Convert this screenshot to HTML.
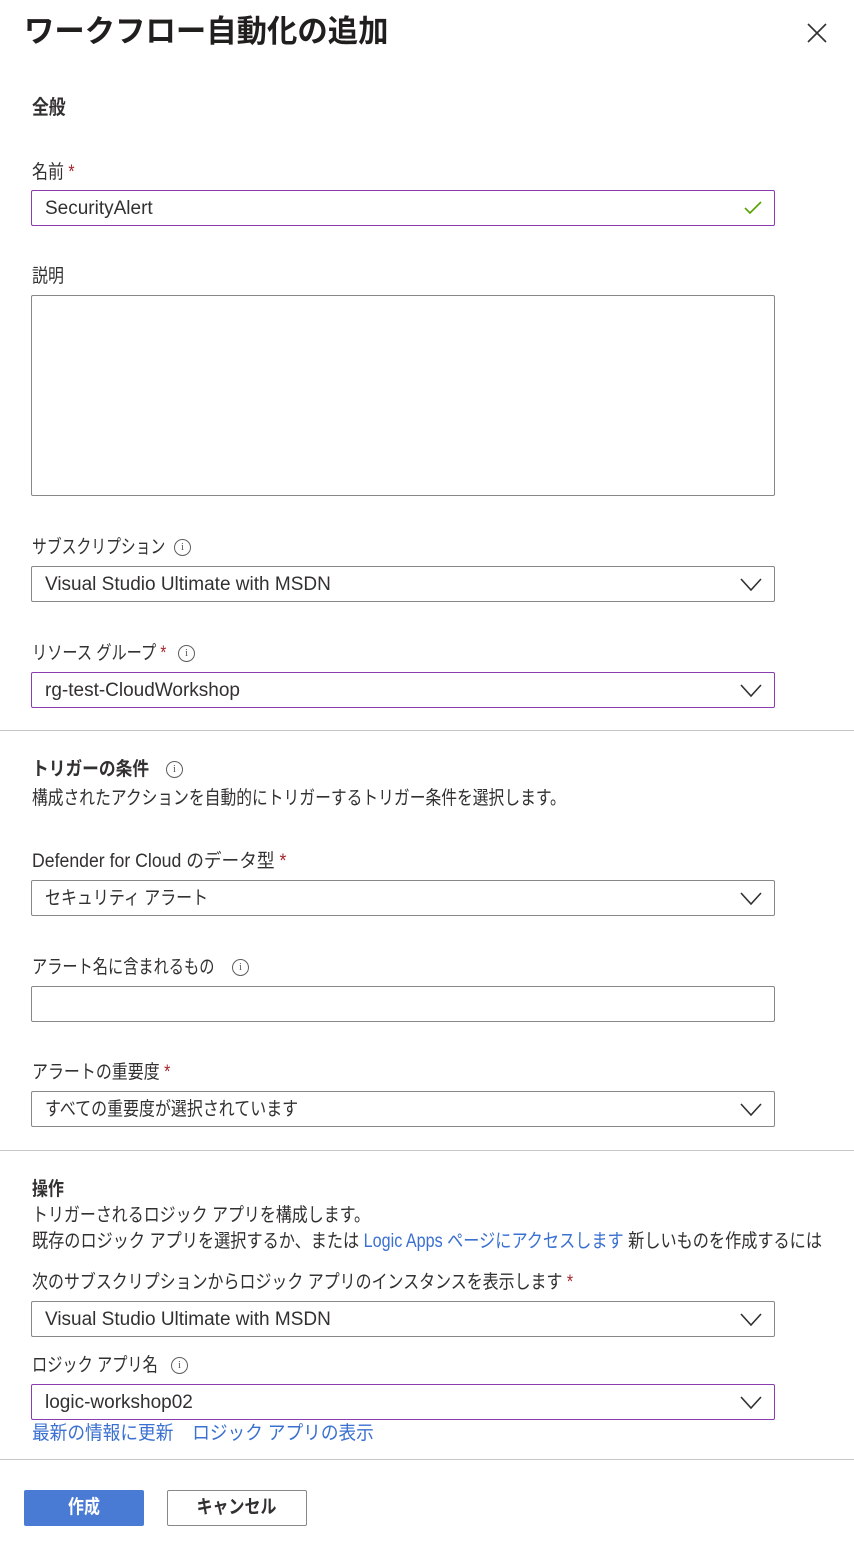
<!DOCTYPE html>
<html><head><meta charset="utf-8"><style>
*{margin:0;padding:0;box-sizing:border-box}
body{width:854px;height:1548px;background:#fff;position:relative;font-family:"Liberation Sans","Noto Sans CJK JP",sans-serif;color:#323130;overflow:hidden}
.a{position:absolute;white-space:nowrap}
.lbl{font-size:19px;line-height:24px;left:32px;transform:scaleX(.84);transform-origin:0 50%}
.req{color:#a4262c}
.box{position:absolute;left:31px;width:744px;height:36px;border:1px solid #8a8886;border-radius:2px;font-size:19px;line-height:36px;padding-left:13px;color:#323130;white-space:nowrap}
.p{border-color:#8a3cb0}
.chev{position:absolute;right:12px;top:11px}
.j{display:inline-block;transform:scaleX(.84);transform-origin:0 50%}
.info{position:absolute;width:17px;height:17px;border:1px solid #605e5c;border-radius:50%;font-size:11px;line-height:15px;text-align:center;color:#605e5c;font-family:"Liberation Serif",serif}
.hr{position:absolute;left:0;width:854px;height:1px;background:#c8c6c4}
.lnk{color:#3a70d0}
</style></head><body>
<div class="a" style="left:24px;top:12px;font-size:31px;line-height:40px;font-weight:bold;color:#201f1e;transform:scaleX(.98);transform-origin:0 50%">ワークフロー自動化の追加</div>
<svg class="a" style="left:807px;top:23px" width="20" height="20" viewBox="0 0 20 20"><path d="M1 1L19 19M19 1L1 19" stroke="#323130" stroke-width="1.6"/></svg>
<div class="a lbl" style="top:95px;font-size:20px;line-height:26px;font-weight:bold">全般</div>
<div class="a lbl" style="top:161px">名前 <span class="req">*</span></div>
<div class="box p" style="top:190px">SecurityAlert<svg class="chev" width="18" height="14" viewBox="0 0 18 14" style="top:10px"><path d="M1 7L6 12L17 1" fill="none" stroke="#57a300" stroke-width="1.6"/></svg></div>
<div class="a lbl" style="top:265px">説明</div>
<div class="box" style="top:295px;height:201px"></div>
<div class="a lbl" style="top:536px;transform:scaleX(.78)">サブスクリプション</div><div class="info" style="left:174px;top:539px">i</div>
<div class="box" style="top:566px">Visual Studio Ultimate with MSDN<svg class="chev" width="22" height="13" viewBox="0 0 22 13"><path d="M1 1L11 12L21 1" fill="none" stroke="#323130" stroke-width="1.6"/></svg></div>
<div class="a lbl" style="top:642px;transform:scaleX(.8)">リソース グループ <span class="req">*</span></div><div class="info" style="left:178px;top:645px">i</div>
<div class="box p" style="top:672px">rg-test-CloudWorkshop<svg class="chev" width="22" height="13" viewBox="0 0 22 13"><path d="M1 1L11 12L21 1" fill="none" stroke="#323130" stroke-width="1.6"/></svg></div>
<div class="hr" style="top:730px"></div>
<div class="a lbl" style="top:758px;font-weight:bold;transform:scaleX(.88)">トリガーの条件</div><div class="info" style="left:166px;top:761px">i</div>
<div class="a lbl" style="top:787px;transform:scaleX(.83)">構成されたアクションを自動的にトリガーするトリガー条件を選択します。</div>
<div class="a lbl" style="top:850px;transform:scaleX(.93)">Defender for Cloud のデータ型 <span class="req">*</span></div>
<div class="box" style="top:880px"><span class="j">セキュリティ アラート</span><svg class="chev" width="22" height="13" viewBox="0 0 22 13"><path d="M1 1L11 12L21 1" fill="none" stroke="#323130" stroke-width="1.6"/></svg></div>
<div class="a lbl" style="top:956px;transform:scaleX(.8)">アラート名に含まれるもの</div><div class="info" style="left:232px;top:959px">i</div>
<div class="box" style="top:986px"></div>
<div class="a lbl" style="top:1061px">アラートの重要度 <span class="req">*</span></div>
<div class="box" style="top:1091px"><span class="j">すべての重要度が選択されています</span><svg class="chev" width="22" height="13" viewBox="0 0 22 13"><path d="M1 1L11 12L21 1" fill="none" stroke="#323130" stroke-width="1.6"/></svg></div>
<div class="hr" style="top:1150px"></div>
<div class="a lbl" style="top:1178px;font-weight:bold">操作</div>
<div class="a lbl" style="top:1204px">トリガーされるロジック アプリを構成します。</div>
<div class="a lbl" style="top:1230px;transform:scaleX(.85)">既存のロジック アプリを選択するか、または <span class="lnk">Logic Apps ページにアクセスします</span> 新しいものを作成するには</div>
<div class="a lbl" style="top:1271px">次のサブスクリプションからロジック アプリのインスタンスを表示します <span class="req">*</span></div>
<div class="box" style="top:1301px">Visual Studio Ultimate with MSDN<svg class="chev" width="22" height="13" viewBox="0 0 22 13"><path d="M1 1L11 12L21 1" fill="none" stroke="#323130" stroke-width="1.6"/></svg></div>
<div class="a lbl" style="top:1354px;transform:scaleX(.8)">ロジック アプリ名</div><div class="info" style="left:171px;top:1357px">i</div>
<div class="box p" style="top:1384px">logic-workshop02<svg class="chev" width="22" height="13" viewBox="0 0 22 13"><path d="M1 1L11 12L21 1" fill="none" stroke="#323130" stroke-width="1.6"/></svg></div>
<div class="a lbl lnk" style="top:1422px;transform:scaleX(.93)">最新の情報に更新 <span style="margin-left:15px">ロジック アプリの表示</span></div>
<div class="hr" style="top:1459px"></div>
<div class="a" style="left:24px;top:1490px;width:120px;height:36px;background:#4a7bd4;border-radius:2px;color:#fff;font-size:19px;font-weight:bold;line-height:36px;text-align:center"><span class="j" style="transform-origin:50% 50%">作成</span></div>
<div class="a" style="left:167px;top:1490px;width:140px;height:36px;border:1px solid #8a8886;border-radius:2px;font-size:19px;font-weight:bold;line-height:34px;text-align:center"><span class="j" style="transform-origin:50% 50%">キャンセル</span></div>
</body></html>
